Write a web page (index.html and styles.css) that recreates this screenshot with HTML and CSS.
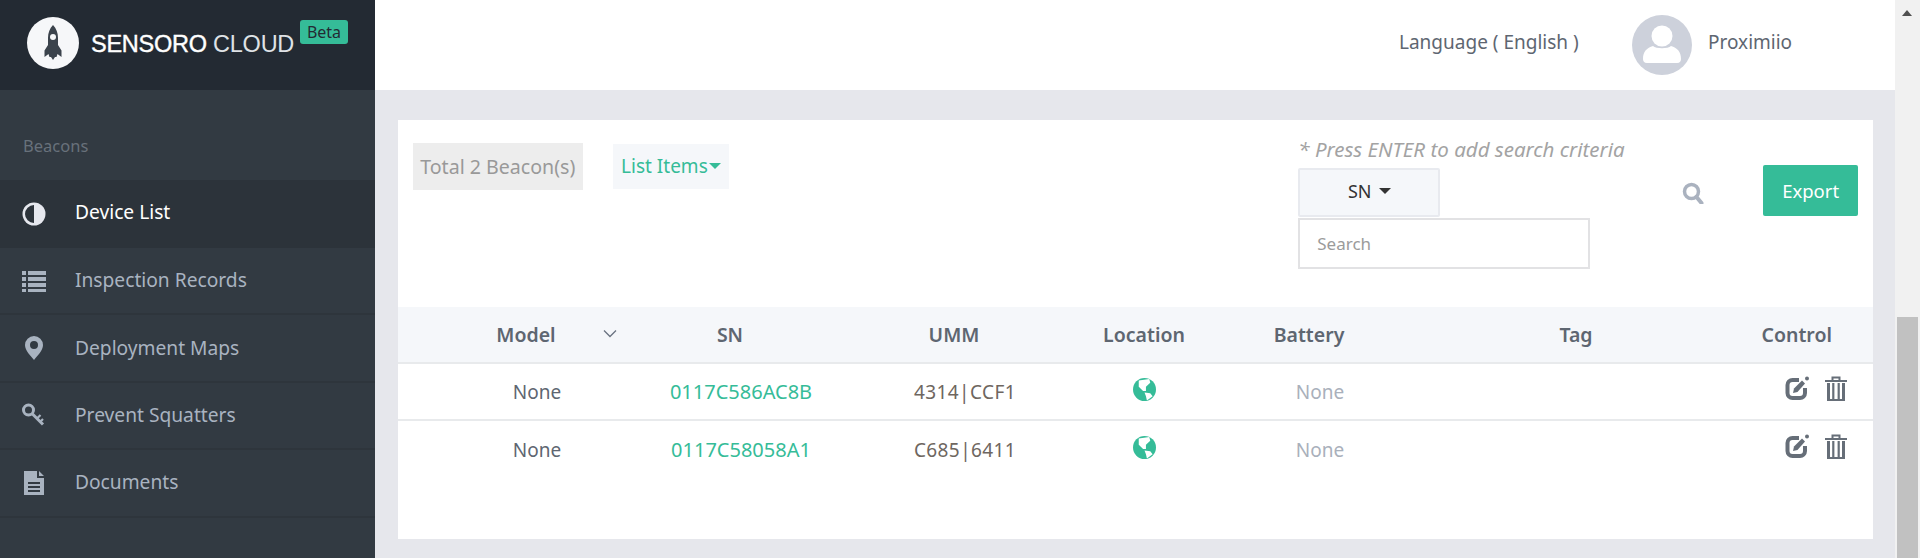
FILE: index.html
```html
<!DOCTYPE html>
<html lang="en">
<head>
<meta charset="utf-8">
<title>Sensoro Cloud</title>
<link rel="stylesheet" href="styles.css">
</head>
<body>
<div class="app">
  <aside class="sidebar">
    <div class="brand">
      <span class="brand-mark">
        <svg width="52" height="52" viewBox="0 0 52 52"><circle cx="26" cy="26" r="26" fill="#f6f7f9"/><path d="M26 8c3.400 3.600 5 8 5 13v7l3.500 5.500v6.500l-4-3-1 3h-1.500l-2 3-2-3h-1.500l-1-3-4 3v-6.500l3.500-5.500v-7c0-5 1.600-9.400 5-13z" fill="#3b434c"/><circle cx="26" cy="20" r="3" fill="#f6f7f9"/></svg>
      </span>
      <span class="brand-name"><b>SENSORO</b> CLOUD</span>
      <span class="beta">Beta</span>
    </div>
    <div class="nav-title">Beacons</div>
    <nav class="nav">
      <a class="nav-item active">
        <svg class="nav-icon" viewBox="0 0 24 24"><circle cx="12" cy="12" r="11.500" fill="#e6e8ee"/><path d="M12 3a9 9 0 0 0 0 18z" fill="#2c333a"/></svg>
        <span>Device List</span>
      </a>
      <a class="nav-item">
        <svg class="nav-icon" viewBox="0 0 24 24"><path d="M0 2h4v4H0zM6 2h18v4H6zM0 8h4v4H0zM6 8h18v4H6zM0 14h4v4H0zM6 14h18v4H6zM0 20h4v3H0zM6 20h18v3H6z" fill="#a9b3c0"/></svg>
        <span>Inspection Records</span>
      </a>
      <a class="nav-item">
        <svg class="nav-icon" viewBox="0 0 24 24"><path fill-rule="evenodd" d="M12 0a9 9 0 0 1 9 9c0 5.500-5.500 10.500-9 15-3.500-4.500-9-9.500-9-15a9 9 0 0 1 9-9zm0 5a4 4 0 1 0 0 8 4 4 0 0 0 0-8z" fill="#a9b3c0"/></svg>
        <span>Deployment Maps</span>
      </a>
      <a class="nav-item">
        <svg class="nav-icon" viewBox="0 0 24 24"><circle cx="6.500" cy="7" r="5" fill="none" stroke="#a9b3c0" stroke-width="3"/><path d="M10 10.500l11 11" stroke="#a9b3c0" stroke-width="3"/><path d="M15 15.500l3.500-3.500M18 19l3-3" stroke="#a9b3c0" stroke-width="2.200"/></svg>
        <span>Prevent Squatters</span>
      </a>
      <a class="nav-item">
        <svg class="nav-icon" viewBox="0 0 24 24"><path fill-rule="evenodd" d="M2 0h13v7h7v17H2zM17 0l5 5h-5zM6 11v2h12v-2zM6 15v2h12v-2zM6 19v2h12v-2z" fill="#a9b3c0"/></svg>
        <span>Documents</span>
      </a>
    </nav>
  </aside>

  <main class="main">
    <header class="topbar">
      <span class="language">Language ( English )</span>
      <span class="avatar">
        <svg width="60" height="60" viewBox="0 0 60 60"><circle cx="30" cy="30" r="30" fill="#cdd1db"/><circle cx="30" cy="21" r="10.500" fill="#fff"/><path d="M11 44c0-8 4-11 10-13 3 3 15 3 18 0 6 2 10 5 10 13 0 2-1 4-4 4H15c-3 0-4-2-4-4z" fill="#fff"/></svg>
      </span>
      <span class="username">Proximiio</span>
    </header>

    <section class="card">
      <div class="toolbar">
        <span class="total">Total 2 Beacon(s)</span>
        <span class="list-items">List Items<i class="caret caret-green"></i></span>
        <div class="search">
          <div class="hint">* Press ENTER to add search criteria</div>
          <div class="search-row">
            <span class="sn-select">SN<i class="caret caret-dark"></i></span>
            <svg class="search-icon" viewBox="0 0 22 22"><circle cx="9.500" cy="9.500" r="7" fill="none" stroke="#aab2bf" stroke-width="3.500"/><path d="M14.500 15l5 6" stroke="#aab2bf" stroke-width="4" stroke-linecap="round"/></svg>
          </div>
          <input class="search-input" type="text" placeholder="Search">
        </div>
        <button class="export" type="button">Export</button>
      </div>

      <div class="table">
        <div class="row head">
          <div class="cell shift sortable">Model
            <svg class="chevron" viewBox="0 0 14 9"><path d="M1 1.500l6 6 6-6" fill="none" stroke="#6a7380" stroke-width="1.300"/></svg>
          </div>
          <div class="cell shift">SN</div>
          <div class="cell shift">UMM</div>
          <div class="cell">Location</div>
          <div class="cell shift">Battery</div>
          <div class="cell">Tag</div>
          <div class="cell control">Control</div>
        </div>
        <div class="row">
          <div class="cell">None</div>
          <div class="cell link">0117C586AC8B</div>
          <div class="cell umm">4314|CCF1</div>
          <div class="cell up"><svg class="globe" viewBox="0 0 24 24"><circle cx="12" cy="12" r="12" fill="#35bc98"/><path d="M6 2.500L17 1l1 4-4.500 4v4.500H10.500L6 9zM12 15l6 1 2.500 3-6 4.500-1-4.500z" fill="#fff"/></svg></div>
          <div class="cell muted">None</div>
          <div class="cell"></div>
          <div class="cell actions">
            <svg class="edit" viewBox="0 0 24 24"><path d="M14 4H7.500a5 5 0 0 0-5 5v8a5 5 0 0 0 5 5H15a5 5 0 0 0 5-5v-5" fill="none" stroke="#666e78" stroke-width="4"/><path d="M8 17l1-4.500 8-8 3 3-7.500 8.500z" fill="#666e78"/><circle cx="22" cy="2.500" r="2" fill="#666e78"/></svg>
            <svg class="trash" viewBox="0 0 22 25"><path d="M0 4h22v2H0zM6.500 4V.5h9V4h-2V2.500h-5V4zM2 7h3v18H2zM2 23h18v2H2zM17 7h3v18h-3zM7.200 7h2.200v16H7.200zM12.600 7h2.200v16h-2.200z" fill="#666e78"/></svg>
          </div>
        </div>
        <div class="row">
          <div class="cell">None</div>
          <div class="cell link">0117C58058A1</div>
          <div class="cell umm">C685|6411</div>
          <div class="cell up"><svg class="globe" viewBox="0 0 24 24"><circle cx="12" cy="12" r="12" fill="#35bc98"/><path d="M6 2.500L17 1l1 4-4.500 4v4.500H10.500L6 9zM12 15l6 1 2.500 3-6 4.500-1-4.500z" fill="#fff"/></svg></div>
          <div class="cell muted">None</div>
          <div class="cell"></div>
          <div class="cell actions">
            <svg class="edit" viewBox="0 0 24 24"><path d="M14 4H7.500a5 5 0 0 0-5 5v8a5 5 0 0 0 5 5H15a5 5 0 0 0 5-5v-5" fill="none" stroke="#666e78" stroke-width="4"/><path d="M8 17l1-4.500 8-8 3 3-7.500 8.500z" fill="#666e78"/><circle cx="22" cy="2.500" r="2" fill="#666e78"/></svg>
            <svg class="trash" viewBox="0 0 22 25"><path d="M0 4h22v2H0zM6.500 4V.5h9V4h-2V2.500h-5V4zM2 7h3v18H2zM2 23h18v2H2zM17 7h3v18h-3zM7.200 7h2.200v16H7.200zM12.600 7h2.200v16h-2.200z" fill="#666e78"/></svg>
          </div>
        </div>
      </div>
    </section>
  </main>

  <div class="scrollbar">
    <i class="scroll-arrow"></i>
    <div class="scroll-thumb"></div>
  </div>
</div>
</body>
</html>
```
FILE: styles.css
```css
* { box-sizing: border-box; }
html, body { margin: 0; height: 100%; overflow: hidden; }
body { font-family: "Noto Sans", "Open Sans", sans-serif; font-size: 19px; color: #5e6671; background: #e6e7ec; }

.app { display: flex; height: 558px; }

/* Sidebar */
.sidebar { flex: 0 0 375px; background: #323a42; }
.brand { height: 90px; background: #232a33; display: flex; align-items: center; padding-left: 27px; position: relative; }
.brand-mark { display: block; height: 52px; margin-top: -4px; }
.brand-name { margin: -2px 0 0 12px; font-family: "Liberation Sans", sans-serif; font-size: 23.500px; font-weight: 400; color: #dfe2e6; letter-spacing: -.25px; white-space: nowrap; }
.brand-name b { font-weight: 400; color: #fff; -webkit-text-stroke: .4px #fff; }
.beta { position: absolute; left: 300px; top: 20px; width: 48px; height: 24px; border-radius: 3px; background: #35bc98; color: #232a33; font-size: 16px; line-height: 24px; text-align: center; }
.nav-title { height: 90px; padding: 45px 0 0 23px; font-size: 16.500px; line-height: 22px; color: #68717b; }
.nav-item { display: flex; align-items: center; height: 67.400px; padding-left: 22px; color: #a9b3c0; border-bottom: 2px solid #2e353c; font-size: 19.200px; }
.nav-item span { margin-top: -2px; }
.nav-item.active { height: 68px; background: #2c333a; color: #fff; border-bottom: 0; }
.nav-item.active span { margin-top: -6px; }
.nav-icon { width: 24px; height: 24px; margin-right: 29px; flex: none; }

/* Main */
.main { flex: 1; min-width: 0; }
.topbar { height: 90px; background: #fff; display: flex; align-items: center; padding-left: 1024px; }
.language { width: 233px; white-space: nowrap; margin-top: -6px; }
.avatar { display: block; height: 60px; margin-right: 16px; }
.username { white-space: nowrap; margin-top: -6px; }

.card { margin: 30px 22px 0 23px; height: 419px; background: #fff; }
.toolbar { height: 187px; display: flex; align-items: flex-start; padding: 23px 15px 0; position: relative; }
.total { width: 170px; height: 47px; line-height: 47px; text-align: center; background: #ededed; color: #999; white-space: nowrap; font-size: 19.600px; }
.list-items { width: 117px; height: 45px; margin: 1px 0 0 30px; line-height: 45px; text-align: center; background: #f5f7fa; color: #35bc98; white-space: nowrap; }
.caret { display: inline-block; width: 0; height: 0; margin-left: 1px; vertical-align: 4px; border-left: 6px solid transparent; border-right: 6px solid transparent; }
.caret-green { border-top: 6px solid #35bc98; }
.caret-dark { border-top: 6px solid #333; margin-left: 7px; }

.search { width: 410px; margin-left: 569px; }
.hint { height: 25px; font-size: 20.500px; font-style: italic; color: #a3a3a3; line-height: 12px; white-space: nowrap; }
.search-row { display: flex; align-items: center; height: 49px; }
.sn-select { width: 142px; height: 49px; line-height: 43px; text-align: center; background: #f5f7fa; border: 2px solid #e8eaef; border-radius: 2px; color: #333; font-size: 18px; }
.search-icon { width: 22px; height: 22px; margin-left: 242px; }
.search-input { display: block; width: 292px; height: 51px; margin-top: 1px; padding: 0 17px; border: 2px solid #e2e2e4; background: #fff; font: inherit; font-size: 17px; color: #5e6671; outline: 0; }
.search-input::placeholder { color: #9b9b9b; opacity: 1; }
.export { width: 95px; height: 51px; margin: 22px 0 0 56px; border: 0; border-radius: 2px; background: #35bc98; color: #fff; font: inherit; font-size: 18.500px; cursor: pointer; }

/* Table */
.row { display: grid; grid-template-columns: 242px 202px 246px 112px 240px 272px 161px; height: 57px; border-bottom: 2px solid #e8eaec; align-items: center; }
.row:last-child { border-bottom: 0; }
.head { height: 57px; background: #f5f7fa; font-weight: 600; color: #5e6671; font-size: 19.500px; }
.cell { text-align: center; white-space: nowrap; }
.cell:first-child { padding-left: 36px; }
.shift { padding-right: 22px; }
.sortable { position: relative; }
.chevron { position: absolute; left: 205px; top: 50%; width: 14px; height: 9px; margin-top: -6px; }
.link { color: #35bc98; font-size: 20px; }
.umm { color: #6e6660; letter-spacing: .4px; }
.muted { color: #a9b0bb; }
.up { display: flex; justify-content: center; margin-top: -5px; }
.globe { width: 23px; height: 23px; display: block; }
.control { text-align: right; padding-right: 41px; }
.actions { display: flex; align-items: center; padding-left: 73px; gap: 16px; margin-top: -7px; }
.edit { width: 24px; height: 24px; }
.trash { width: 22px; height: 25px; }

/* Scrollbar */
.scrollbar { flex: 0 0 25px; background: #f1f1f1; position: relative; }
.scroll-arrow { position: absolute; left: 7px; top: 10px; width: 0; height: 0; border-left: 5.500px solid transparent; border-right: 5.500px solid transparent; border-bottom: 6px solid #505050; }
.scroll-thumb { position: absolute; left: 2px; right: 2px; top: 317px; bottom: 0; background: #c1c1c1; }
```
